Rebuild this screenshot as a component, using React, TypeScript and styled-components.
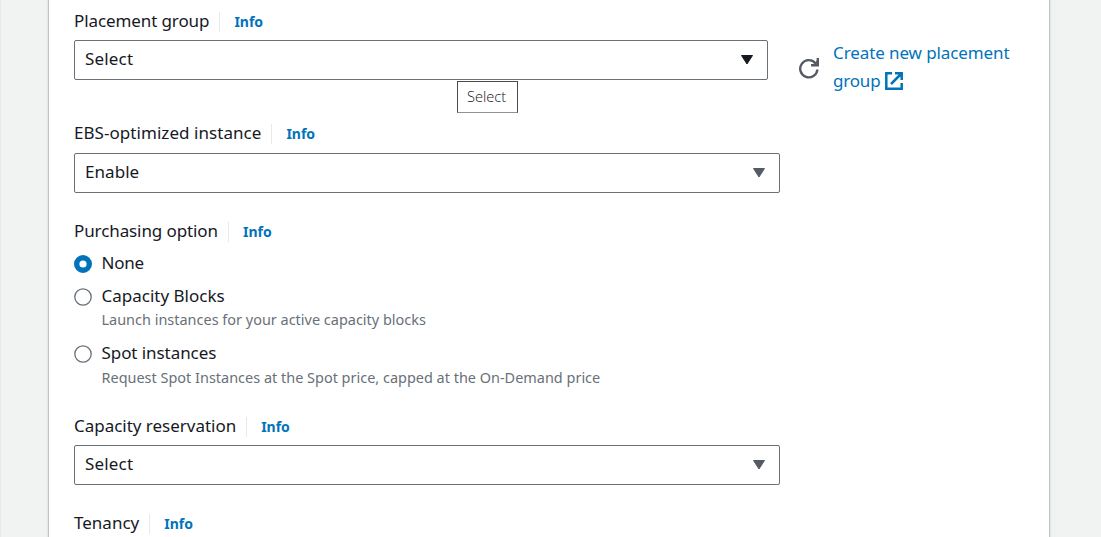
import React from "react";
import styled, { createGlobalStyle } from "styled-components";

const GlobalStyle = createGlobalStyle`
  * { box-sizing: border-box; }
  html, body { margin: 0; height: 100%; overflow: hidden; }
  body { background: #f1f3f3; font-family: "Noto Sans", "Open Sans", sans-serif; color: #16191f; }
`;

const Page = styled.div`
  display: flex;
  width: 1101px;
  height: 537px;
  padding-left: 48px;
  overflow: hidden;
  background: #f1f3f3;
  border-left: 1px solid #e6e9e9;
`;

const Card = styled.main`
  display: flex;
  flex-direction: column;
  flex: none;
  width: 1002px;
  height: 560px;
  margin-left: -1px;
  padding: 12px 0 0 25px;
  background: #fff;
  border: solid #bfc5c7;
  border-width: 0 1px;
  box-shadow: 0 0 1px 1px #e3e7e7;
`;

const Field = styled.section<{ $gap: number }>`
  position: relative;
  display: flex;
  flex-direction: column;
  flex: none;
  margin-bottom: ${(p) => p.$gap}px;
`;

const LabelRow = styled.div<{ $gap: number }>`
  display: flex;
  align-items: center;
  height: 20px;
  margin-bottom: ${(p) => p.$gap}px;
`;

const Text = styled.span<{ $track?: number }>`
  font-size: 17px;
  line-height: 20px;
  white-space: nowrap;
  letter-spacing: ${(p) => p.$track ?? 0}px;
`;

const LabelText = styled(Text)`
  margin-top: -2px;
`;

const Info = styled.a`
  height: 20px;
  margin-left: 10px;
  padding-left: 14px;
  border-left: 1px solid #e6eaea;
  color: #0073bb;
  font-size: 14px;
  font-weight: 700;
  line-height: 20px;
`;

const ControlRow = styled.div`
  display: flex;
  align-items: center;
  height: 40px;
`;

const SelectBox = styled.div<{ $width: number }>`
  display: flex;
  align-items: center;
  justify-content: space-between;
  width: ${(p) => p.$width}px;
  height: 40px;
  padding: 0 13px 2px 10px;
  border: 1px solid #687078;
  border-radius: 2px;
  background: #fff;
`;

const Caret = styled.svg<{ $active?: boolean }>`
  display: block;
  width: 14px;
  height: 12px;
  margin-top: 2px;
  fill: ${(p) => (p.$active ? "#16191f" : "#545b64")};
  stroke: ${(p) => (p.$active ? "#16191f" : "#545b64")};
`;

const RefreshIcon = styled.svg`
  flex: none;
  width: 22px;
  height: 22px;
  margin: 15px 0 0 30px;
  fill: none;
  stroke: #545b64;
  stroke-width: 2.4;
`;

const CreateLink = styled.a`
  display: flex;
  flex-direction: column;
  margin: 14px 0 0 13px;
  color: #0073bb;
`;

const LinkLine = styled.span`
  display: flex;
  align-items: center;
  height: 28px;
  gap: 5px;
`;

const ExternalIcon = styled.svg`
  width: 18px;
  height: 18px;
  fill: none;
  stroke: #0073bb;
  stroke-width: 2.5;
`;

const Tooltip = styled.div`
  position: absolute;
  left: 383px;
  top: 69px;
  width: 61px;
  height: 32px;
  padding-left: 9px;
  border: 1px solid #4b4b4b;
  border-bottom-color: #929292;
  background: #fff;
  color: #111;
  font-family: "Open Sans", "Noto Sans", sans-serif;
  font-size: 14.6px;
  font-weight: 300;
  line-height: 28px;
`;

const RadioGroup = styled.div`
  display: flex;
  flex-direction: column;
  padding-top: 3px;
`;

const Option = styled.label<{ $height: number }>`
  display: grid;
  grid-template-columns: 18px auto;
  column-gap: 9.5px;
  align-content: start;
  height: ${(p) => p.$height}px;
`;

const RadioMark = styled.svg<{ $checked?: boolean }>`
  display: block;
  width: 18px;
  height: 18px;
  margin-top: 1.7px;
  fill: #fff;
  stroke: ${(p) => (p.$checked ? "#0073bb" : "#687078")};
  stroke-width: ${(p) => (p.$checked ? 5.4 : 1.3)};
`;

const Description = styled.span<{ $offset?: number }>`
  grid-column: 2;
  margin-top: ${(p) => p.$offset ?? 5}px;
  color: #687078;
  font-size: 14.45px;
  line-height: 18px;
  white-space: nowrap;
  letter-spacing: 0.01px;
`;

const Label = ({ text, track, gap = 8 }: { text: string; track?: number; gap?: number }) => (
  <LabelRow $gap={gap}>
    <LabelText $track={track}>{text}</LabelText>
    <Info>Info</Info>
  </LabelRow>
);

const Radio = ({ checked }: { checked?: boolean }) => (
  <RadioMark viewBox="0 0 18 18" $checked={checked}>
    <circle cx="9" cy="9" r={checked ? 6.3 : 8.2} />
  </RadioMark>
);

type SelectProps = { value: string; width?: number; active?: boolean; track?: number };

const Select = ({ value, width = 706, active, track }: SelectProps) => (
  <SelectBox $width={width}>
    <Text $track={track}>{value}</Text>
    <Caret viewBox="0 0 14 12" $active={active}>
      <path d="M1.5 1.5H12.5L7 10Z" strokeWidth="1" strokeLinejoin="round" />
    </Caret>
  </SelectBox>
);

export default function App() {
  return (
    <>
      <GlobalStyle />
      <Page>
        <Card>
          <Field $gap={44}>
            <Label text="Placement group" track={-0.1} />
            <ControlRow>
              <Select value="Select" width={694} active track={0.17} />
              <RefreshIcon viewBox="0 0 22 22">
                <path d="M19.4 12.5A8.6 8.6 0 1 1 17.4 6.2" />
                <path d="M19.8 1V8.3H13" />
                <path d="M19.8 4L16 8.3" strokeWidth="2" />
              </RefreshIcon>
              <CreateLink>
                <LinkLine>
                  <Text $track={-0.1}>Create new placement</Text>
                </LinkLine>
                <LinkLine>
                  <Text $track={-0.2}>group</Text>
                  <ExternalIcon viewBox="0 0 18 18">
                    <path d="M7 1.3H1.3V16.7H16.7V11M10 1.3H16.7V8M16 2L6 12" />
                  </ExternalIcon>
                </LinkLine>
              </CreateLink>
            </ControlRow>
            <Tooltip>Select</Tooltip>
          </Field>
          <Field $gap={29}>
            <Label text="EBS-optimized instance" track={0.05} gap={9} />
            <Select value="Enable" track={0.05} />
          </Field>
          <Field $gap={0}>
            <Label text="Purchasing option" track={-0.1} />
            <RadioGroup>
              <Option $height={33}>
                <Radio checked />
                <Text $track={-0.25}>None</Text>
              </Option>
              <Option $height={57}>
                <Radio />
                <Text>Capacity Blocks</Text>
                <Description>Launch instances for your active capacity blocks</Description>
              </Option>
              <Option $height={74}>
                <Radio />
                <Text $track={-0.07}>Spot instances</Text>
                <Description $offset={6}>
                  Request Spot Instances at the Spot price, capped at the On-Demand price
                </Description>
              </Option>
            </RadioGroup>
          </Field>
          <Field $gap={29}>
            <Label text="Capacity reservation" track={-0.02} />
            <Select value="Select" track={0.17} />
          </Field>
          <Field $gap={0}>
            <Label text="Tenancy" />
          </Field>
        </Card>
      </Page>
    </>
  );
}
